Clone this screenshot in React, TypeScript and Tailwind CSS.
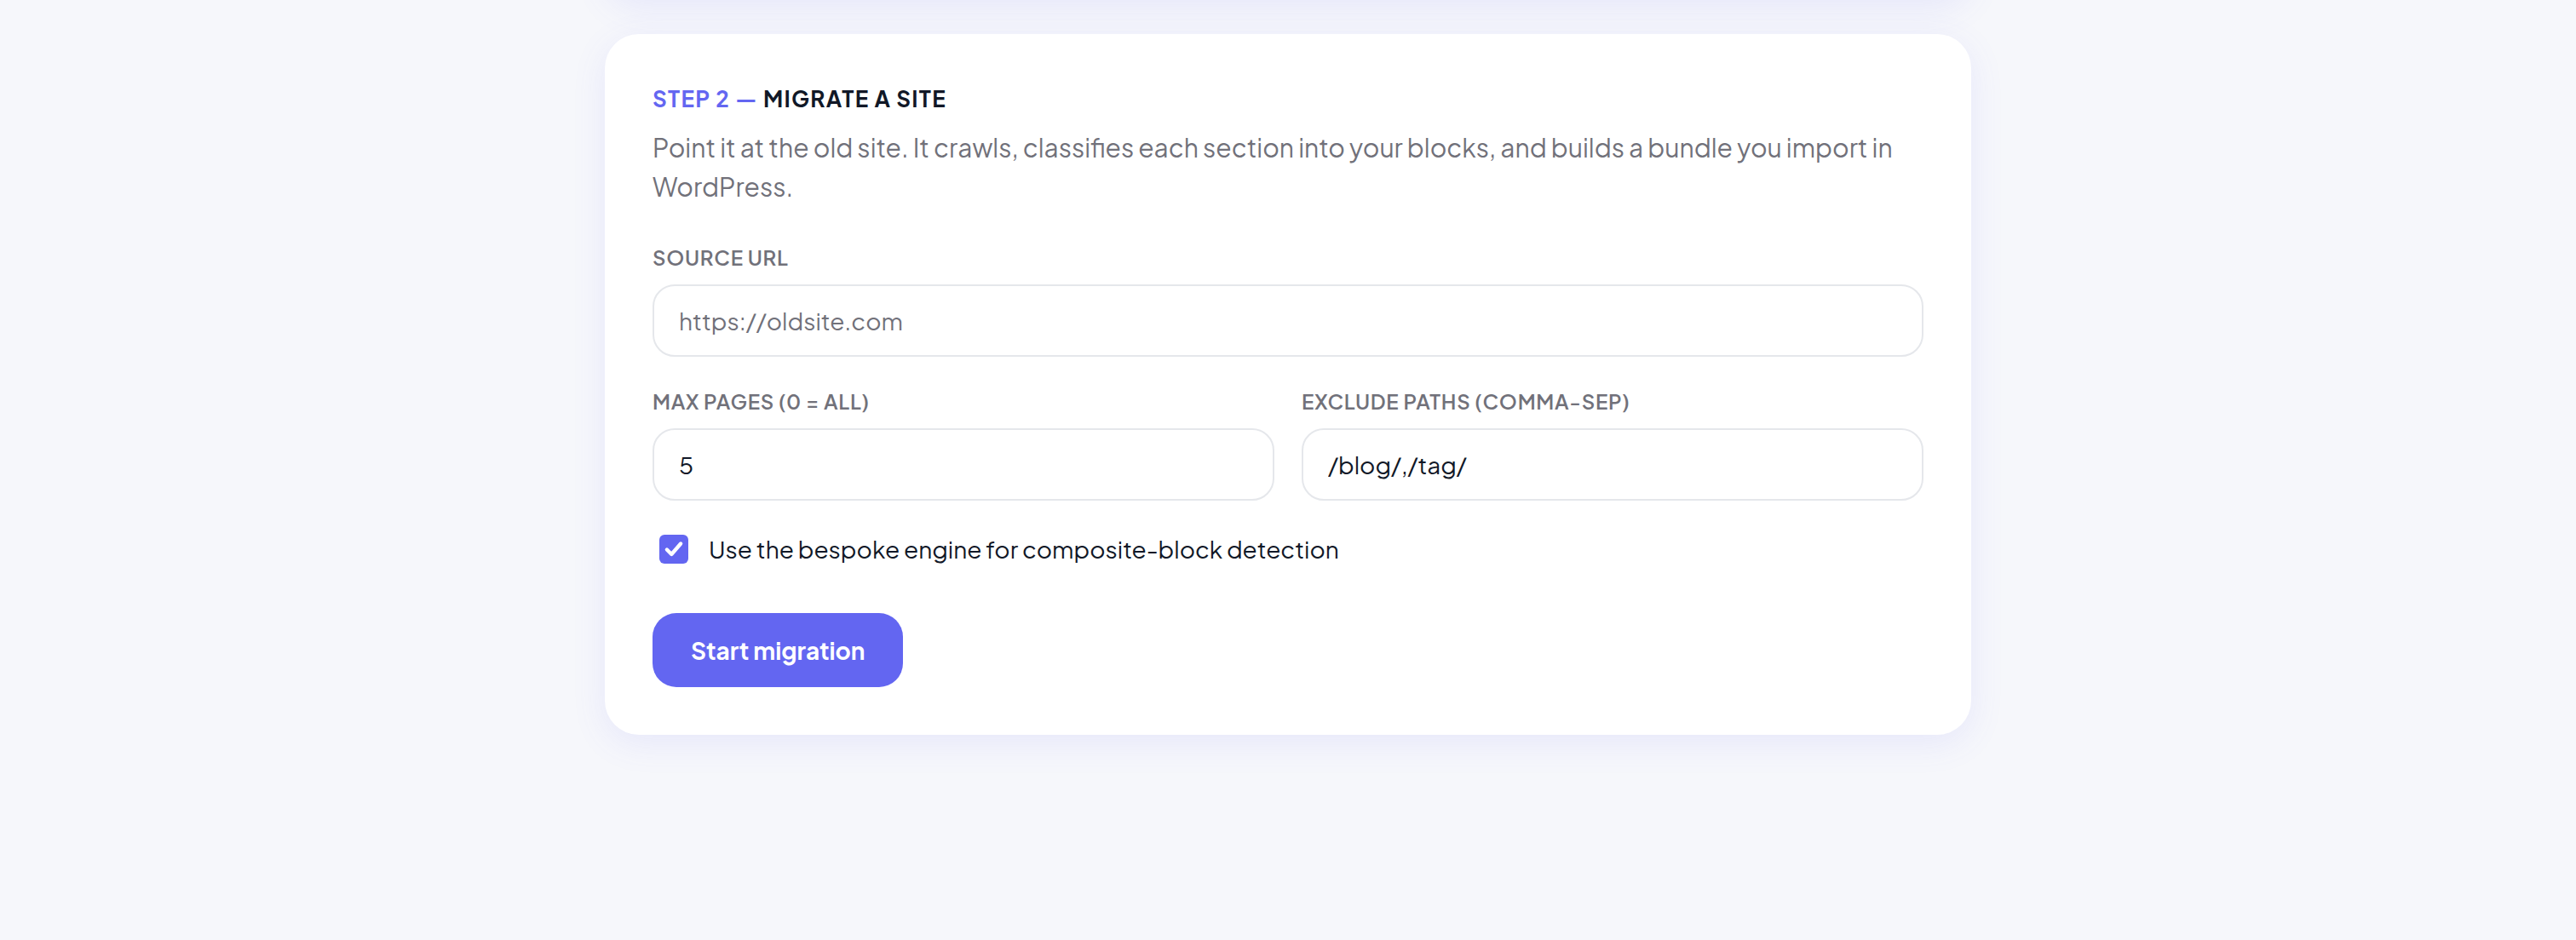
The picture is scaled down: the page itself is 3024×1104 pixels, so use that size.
import React from "react";

const font = { fontFamily: '"Plus Jakarta Sans", Inter, "Noto Sans", sans-serif' };

export default function App() {
  return (
    <div
      className="min-h-[1104px] w-full bg-[#f6f7fb] overflow-hidden"
      style={font}
    >
      <div className="flex flex-col items-center gap-[40px]">
        <div className="-mt-[200px] h-[200px] w-[1604px] rounded-[40px] bg-white shadow-[0_10px_40px_rgba(99,102,241,0.10)]" />
        <div className="w-[1604px] rounded-[40px] bg-white p-[56px] shadow-[0_10px_40px_rgba(99,102,241,0.10)]">
          <div className="text-[26px] font-bold uppercase leading-[40px] tracking-[0.05em]">
            <span className="text-[#6366f1]">Step 2 — </span>
            <span className="text-[#111827]">Migrate a site</span>
          </div>
          <p className="mt-[14px] text-[30px] leading-[46px] text-[#71717a]">
            Point it at the old site. It crawls, classifies each section into your blocks, and builds a bundle you import in WordPress.
          </p>

          <div className="mt-[42px] flex flex-col gap-[14px]">
            <label className="text-[24px] font-semibold uppercase leading-[36px] tracking-[0.03em] text-[#71717a]">
              Source URL
            </label>
            <input
              className="h-[85px] w-full rounded-[26px] border-2 border-[#e5e7eb] bg-white px-[29px] text-[28px] text-[#111827] placeholder:text-[#71717a] outline-none"
              placeholder="https://oldsite.com"
            />
          </div>

          <div className="mt-[34px] grid grid-cols-2 gap-[32px]">
            <div className="flex flex-col gap-[14px]">
              <label className="text-[24px] font-semibold uppercase leading-[36px] tracking-[0.03em] text-[#71717a]">
                Max pages (0 = all)
              </label>
              <input
                className="h-[85px] w-full rounded-[26px] border-2 border-[#e5e7eb] bg-white px-[29px] text-[28px] text-[#111827] outline-none"
                defaultValue="5"
              />
            </div>
            <div className="flex flex-col gap-[14px]">
              <label className="text-[24px] font-semibold uppercase leading-[36px] tracking-[0.03em] text-[#71717a]">
                Exclude paths (comma-sep)
              </label>
              <input
                className="h-[85px] w-full rounded-[26px] border-2 border-[#e5e7eb] bg-white px-[29px] text-[28px] text-[#111827] outline-none"
                defaultValue="/blog/,/tag/"
              />
            </div>
          </div>

          <label className="mt-[34px] flex items-center gap-[24px] pl-[8px]">
            <span className="flex h-[34px] w-[34px] items-center justify-center rounded-[6px] bg-[#6366f1]">
              <svg width="26" height="26" viewBox="0 0 24 24" fill="none">
                <path d="M4.5 12.5l5 5L19.5 6" stroke="white" strokeWidth="4" strokeLinecap="round" strokeLinejoin="round" />
              </svg>
            </span>
            <span className="text-[28px] leading-[46px] text-[#111827]">
              Use the bespoke engine for composite-block detection
            </span>
          </label>

          <button className="mt-[52px] h-[87px] rounded-[28px] bg-[#6366f1] px-[45px] text-[28px] font-bold text-white">
            Start migration
          </button>
        </div>
      </div>
    </div>
  );
}
